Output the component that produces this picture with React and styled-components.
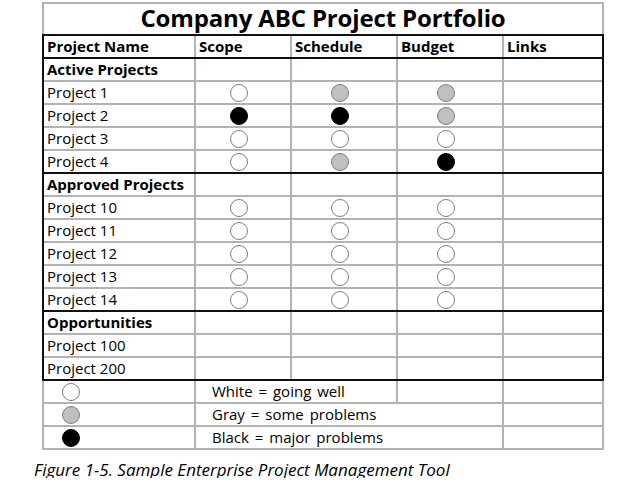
import React from 'react';
import styled, { createGlobalStyle } from 'styled-components';

const GlobalStyle = createGlobalStyle`
  body {
    margin: 0;
    background: #fff;
    color: #000;
    font-family: "Open Sans", "Noto Sans", sans-serif;
  }
`;

const GRAY = '#b3b3b3';
const INK = '#111';
const COLS = '150px 96px 106px 106px 100px';

const Page = styled.div`
  width: 562px;
  padding: 2px 0 0 42px;
`;

const Title = styled.div`
  box-sizing: border-box;
  height: 32px;
  padding-bottom: 3px;
  border: 2px solid ${GRAY};
  border-bottom: none;
  display: flex;
  align-items: center;
  justify-content: center;
  font-size: 24px;
  font-weight: 700;
  letter-spacing: -0.15px;
`;

const Grid = styled.div`
  border: 2px solid ${INK};
`;

const Row = styled.div`
  display: grid;
  grid-template-columns: ${p => p.$cols || COLS};
  height: 21px;
  border-top: ${p => (p.$line === 'black' ? `2px solid ${INK}` : p.$line === 'gray' ? `2px solid ${GRAY}` : 'none')};
`;

const Cell = styled.div`
  display: flex;
  align-items: center;
  justify-content: flex-start;
  padding: 0 0 2px ${p => p.$indent || 3}px;
  border-left: 2px solid ${GRAY};
  font-size: 15px;
  font-weight: ${p => (p.$bold ? 700 : 400)};
  word-spacing: ${p => p.$spread || 0}px;
  white-space: nowrap;
  overflow: hidden;
  &:first-child {
    border-left: none;
  }
`;

const DotCell = styled(Cell)`
  padding: ${p => (p.$indent ? `0 0 0 ${p.$indent}px` : '0 8px 0 0')};
  justify-content: ${p => (p.$indent ? 'flex-start' : 'center')};
`;

const Dot = styled.span`
  width: 18px;
  height: 18px;
  box-sizing: border-box;
  border-radius: 50%;
  border: 1px solid ${p => (p.$tone === 'black' ? '#000' : '#7f7f7f')};
  background: ${p => (p.$tone === 'black' ? '#000' : p.$tone === 'gray' ? '#c0c0c0' : '#fff')};
`;

const Legend = styled.div`
  border: 2px solid ${GRAY};
  border-top: none;
`;

const Caption = styled.div`
  margin: 12px 0 0 -8px;
  font-size: 17px;
  line-height: 16px;
  font-style: italic;
  white-space: nowrap;
`;

const sections = [
  {
    name: 'Active Projects',
    rows: [
      ['Project 1', 'white', 'gray', 'gray'],
      ['Project 2', 'black', 'black', 'gray'],
      ['Project 3', 'white', 'white', 'white'],
      ['Project 4', 'white', 'gray', 'black'],
    ],
  },
  {
    name: 'Approved Projects',
    rows: [
      ['Project 10', 'white', 'white', 'white'],
      ['Project 11', 'white', 'white', 'white'],
      ['Project 12', 'white', 'white', 'white'],
      ['Project 13', 'white', 'white', 'white'],
      ['Project 14', 'white', 'white', 'white'],
    ],
  },
  {
    name: 'Opportunities',
    rows: [['Project 100'], ['Project 200']],
  },
];

const legend = [
  { tone: 'white', text: 'White = going well', split: true },
  { tone: 'gray', text: 'Gray = some problems' },
  { tone: 'black', text: 'Black = major problems' },
];

export default function App() {
  return (
    <Page>
      <GlobalStyle />
      <Title>Company ABC Project Portfolio</Title>
      <Grid>
        <Row>
          {['Project Name', 'Scope', 'Schedule', 'Budget', 'Links'].map(h => (
            <Cell key={h} $bold>{h}</Cell>
          ))}
        </Row>
        {sections.map(sec => (
          <React.Fragment key={sec.name}>
            <Row $line="black">
              <Cell $bold>{sec.name}</Cell>
              <Cell />
              <Cell />
              <Cell />
              <Cell />
            </Row>
            {sec.rows.map(([name, ...tones]) => (
              <Row key={name} $line="gray">
                <Cell>{name}</Cell>
                {[0, 1, 2].map(i => (
                  <DotCell key={i}>{tones[i] && <Dot $tone={tones[i]} />}</DotCell>
                ))}
                <Cell />
              </Row>
            ))}
          </React.Fragment>
        ))}
      </Grid>
      <Legend>
        {legend.map((l, i) => (
          <Row
            key={l.tone}
            $line={i === 0 ? 'none' : 'gray'}
            $cols={l.split ? '150px 202px 106px 100px' : '150px 308px 100px'}
          >
            <DotCell $indent={18}><Dot $tone={l.tone} /></DotCell>
            <Cell $indent={16} $spread={2}>{l.text}</Cell>
            {l.split && <Cell />}
            <Cell />
          </Row>
        ))}
      </Legend>
      <Caption>Figure 1-5. Sample Enterprise Project Management Tool</Caption>
    </Page>
  );
}
